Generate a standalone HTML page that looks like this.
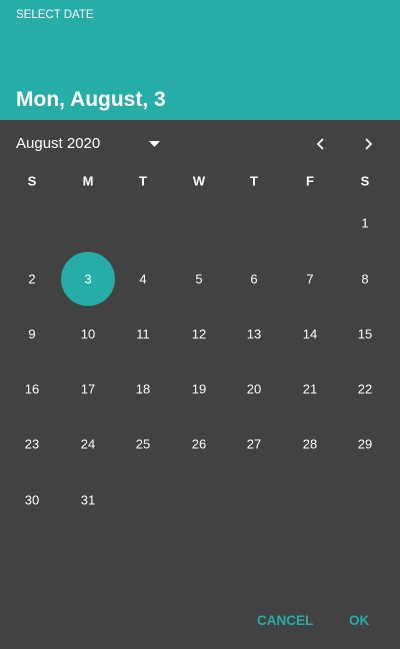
<!DOCTYPE html>
<html><head><style>
body{margin:0;width:400px;height:649px;background:#424242;font-family:"Liberation Sans",sans-serif;position:relative;overflow:hidden}
.h{position:absolute;left:0;top:0;width:400px;height:120px;background:#26ada7;color:#fff}
.a{position:absolute;font-size:11.5px;left:16px;top:9px}
.b{position:absolute;font-size:21px;font-weight:bold;left:16px;top:88px}
.t{position:absolute;color:#fff;transform:translate(-50%,-50%);font-size:13px;white-space:nowrap}
.w{font-weight:bold;font-size:13px}
.c{position:absolute;left:61px;top:252px;width:54px;height:54px;border-radius:50%;background:#26ada7}
.btn{position:absolute;color:#26ada7;font-weight:bold;font-size:13.5px;top:613px}
</style></head><body>
<div class="h"><div class="a">SELECT DATE</div><div class="b">Mon, August, 3</div></div>
<div style="position:absolute;left:16px;top:135px;color:#fff;font-size:15px">August 2020</div>
<svg style="position:absolute;left:149px;top:141px" width="12" height="6"><path d="M0 0H11L5.5 6Z" fill="#fff"/></svg>
<svg style="position:absolute;left:316px;top:137px" width="10" height="14"><path d="M7 2L2 7L7 12" stroke="#fff" stroke-width="1.8" fill="none"/></svg>
<svg style="position:absolute;left:364px;top:137px" width="10" height="14"><path d="M2 2L7 7L2 12" stroke="#fff" stroke-width="1.8" fill="none"/></svg>
<div class="c"></div>
<div id="g"></div>
<div class="btn" style="left:257px">CANCEL</div>
<div class="btn" style="left:349px">OK</div>
<script>
var xs=[32,88,143,199,254,310,365],ys=[223,279,334,389,444,500],h="";
"SMTWTFS".split("").forEach(function(d,i){h+='<div class="t w" style="left:'+xs[i]+'px;top:181px">'+d+'</div>'});
for(var d=1;d<=31;d++){var p=d+5,r=Math.floor(p/7),c=p%7;h+='<div class="t" style="left:'+xs[c]+'px;top:'+ys[r]+'px">'+d+'</div>'}
document.getElementById("g").innerHTML=h;
</script>
</body></html>
